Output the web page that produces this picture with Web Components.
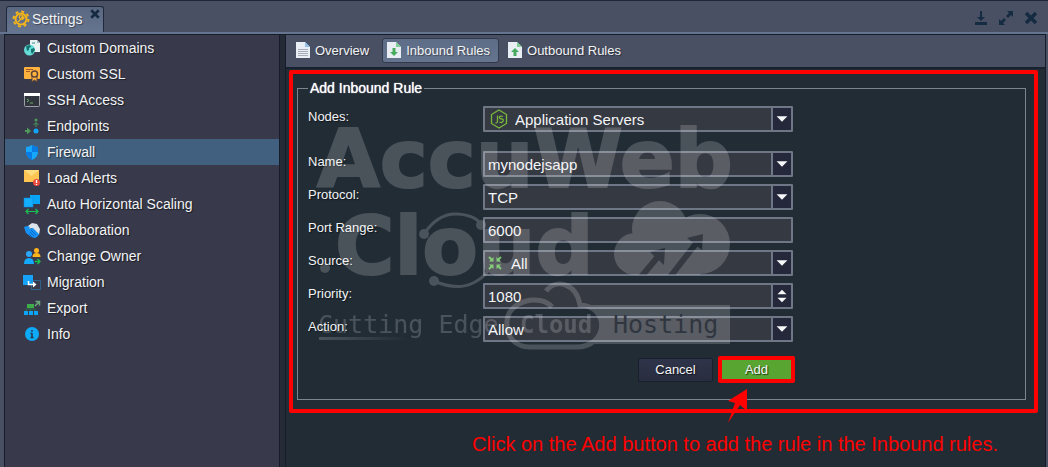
<!DOCTYPE html>
<html lang="en">

<head>
    <meta charset="UTF-8">
    <meta name="viewport" content="width=device-width, initial-scale=1.0">
    <title>Settings</title>
    <style>
        body {
            margin: 0;
            font: 14px "Liberation Sans", Arial, sans-serif;
            color: #f2f4f6;
            background: #495063;
        }
    </style>
</head>

<body>
    <settings-window>
        <app-icon slot="tab" name="gear"></app-icon>
        <span slot="tab">Settings</span>

        <side-item slot="menu" icon="domains">Custom Domains</side-item>
        <side-item slot="menu" icon="ssl">Custom SSL</side-item>
        <side-item slot="menu" icon="ssh">SSH Access</side-item>
        <side-item slot="menu" icon="endpoints">Endpoints</side-item>
        <side-item slot="menu" icon="firewall" active>Firewall</side-item>
        <side-item slot="menu" icon="alerts">Load Alerts</side-item>
        <side-item slot="menu" icon="scaling">Auto Horizontal Scaling</side-item>
        <side-item slot="menu" icon="collab">Collaboration</side-item>
        <side-item slot="menu" icon="owner">Change Owner</side-item>
        <side-item slot="menu" icon="migration">Migration</side-item>
        <side-item slot="menu" icon="export">Export</side-item>
        <side-item slot="menu" icon="info">Info</side-item>

        <tool-tab slot="toolbar" icon="page">Overview</tool-tab>
        <tool-tab slot="toolbar" icon="inbound" active>Inbound Rules</tool-tab>
        <tool-tab slot="toolbar" icon="outbound">Outbound Rules</tool-tab>

        <rule-form></rule-form>
    </settings-window>

    <script>
        // inner markup of the 16x16 icons
        const icons = {
            gear: `<g fill="none" stroke="#f5b519"><circle cx="8" cy="8" r="5.500" stroke-width="2"/>
                <circle cx="8" cy="8" r="7.500" stroke-width="2" stroke-dasharray="2.950 2.940"/></g>
                <path d="M5 11l3-3M8 8a2 2 0 1 1 2-3l-1.500 1.500 1 1L11 6a2 2 0 0 1-3 2z" stroke="#f5b519" stroke-width="1.200" fill="none"/>`,
            domains: `<path d="M6 0h7l3 3v9H6z" fill="#e8f1f2"/><path d="M13 0l3 3h-3z" fill="#9fb8bd"/><path d="M8 3h3" stroke="#2f8f88"/>
                <circle cx="5.500" cy="10" r="5.500" fill="#65dcd8"/><path d="M2 6l4-1 1 2-2 1v2l-2 1zM7 9l3-1 1 2-3 4-1-2z" fill="#17736f"/>`,
            ssl: `<rect y="1" width="16" height="12" rx="1" fill="#ffb13d"/><path d="M2 3.500h7M2 5.500h4" stroke="#a75b2b"/>
                <path d="M8 10v6l2.500-2 2.500 2v-6z" fill="#ffb13d" stroke="#5c4339"/><circle cx="10.500" cy="8" r="3" fill="#ffb13d" stroke="#5c4339" stroke-width="1.500"/>`,
            ssh: `<rect x=".5" y="1.500" width="15" height="13" rx="1" fill="#30343c" stroke="#9da0a6"/><path d="M0 1h16v3H0z" fill="#fff"/>
                <path d="M3 7l2 1.500L3 10M6 11h3" fill="none" stroke="#6cab69"/>`,
            endpoints: `<circle cx="12" cy="13" r="2.500" fill="#11a5f5"/><circle cx="12" cy="2" r="1.500" fill="#4d9a5b"/>
                <path d="M12 9V5M9.500 7L12 4.500 14.500 7" stroke="#4d9a5b" fill="none"/><path d="M1 12h2V9.500L7 13l-4 3.500V14H1z" fill="#4d9a5b"/>`,
            firewall: `<path d="M8 1q3 2 6 2v5q0 5-6 8-6-3-6-8V3q3 0 6-2z" fill="#16a8ff"/><path d="M8 1q3 2 6 2v5H8zM2 8h6v8q-6-3-6-8z" fill="#087be4"/>`,
            alerts: `<path d="M0 0h15v12H0z" fill="#ffc451"/><path d="M0 0h15L7.500 6z" fill="#ffdc7e"/>
                <circle cx="12.500" cy="12.500" r="3.500" fill="#e84a3c"/><path d="M12.500 10v3M12.500 14v1" stroke="#fff" stroke-width="1.300"/>`,
            scaling: `<rect x="6" y="-1" width="10" height="9" fill="#08a4f7"/><rect x="0" y="2" width="9" height="9" fill="#14aeff" stroke="#0a86d3" stroke-width=".5"/>
                <path d="M2 15.500h12M4.500 13L2 15.500 4.500 18M11.500 13l2.500 2.500-2.500 2.500" fill="none" stroke="#18c352" stroke-width="1.200"/>`,
            collab: `<path d="M4 4l4-3 5 1 3 5-1 6-5-4-2-3-3 1z" fill="#dce3ea"/><path d="M0 5l3-1 3 1-1 2 4-1 6 6-1 2-1 1-2 1-4-1-5-4z" fill="#1592f4"/>
                <path d="M7 8l5 5M6 10l4 4M5 12l3 3" stroke="#0969c8" fill="none"/>`,
            owner: `<circle cx="12.500" cy="2.500" r="2.500" fill="#ffb31a"/><path d="M8.500 9q0-4 4-4t4 4z" fill="#ffb31a"/>
                <circle cx="5" cy="6" r="3" fill="#2aa6ff"/><path d="M0 16q0-6 5-6t5 6z" fill="#12a9ff"/><path d="M11 13.500h5M13.500 11l2.500 2.500-2.500 2.500" stroke="#18c352" fill="none" stroke-width="1.300"/>`,
            migration: `<rect x="-1" y="1" width="10" height="10" fill="#15a3f9"/><path d="M7.500 6.500h9v9h-9z" fill="none" stroke="#2588c9" stroke-dasharray="1 1"/>
                <path d="M4.500 7v3.500H10" fill="none" stroke="#fff" stroke-width="1.500"/><path d="M9 7.500l3.500 3L9 13.500z" fill="#fff"/>`,
            export: `<path d="M3 4h7v4H3z" fill="#3fae4a"/><path d="M2 11V9h9v2M6.500 8v3" stroke="#2c6e45" fill="none"/><path d="M0 11h4v4H0zM5 11h4v4H5zM10 11h4v4h-4z" fill="#0ca5f5"/>
                <path d="M11 6l4-4M11.500 1.500H15.500V5.500" stroke="#6ba97a" stroke-width="1.500" fill="none"/>`,
            info: `<circle cx="8" cy="8" r="7" fill="#0caaf8"/><path d="M8 4v1.800M8 7v5M6.500 7.500H8M6.500 11.500h3" stroke="#25344a" stroke-width="1.500"/>`,
            page: `<path d="M1 0h9l5 5v11H1z" fill="#e9eef4"/><path d="M10 0l5 5h-5z" fill="#8fc0ea"/><path d="M3 7.500h10M3 9.500h10M3 11.500h10M3 13.500h10" stroke="#a6adb8"/>`,
            inbound: `<path d="M1 0h9l5 5v11H1z" fill="#e9eef4"/><path d="M10 0l5 5h-5z" fill="#7fcf91"/><path d="M6.500 6h3v4H12l-4 4-4-4h2.500z" fill="#46ab5c"/>`,
            outbound: `<path d="M1 0h9l5 5v11H1z" fill="#e9eef4"/><path d="M10 0l5 5h-5z" fill="#7fcf91"/><path d="M6.500 14h3v-4H12L8 6l-4 4h2.500z" fill="#46ab5c"/>`,
            node: `<path d="M8-1l7.500 4.500v9L8 17 .5 12.500v-9z" fill="none" stroke="#79b93c" stroke-width="1.300"/>
                <path d="M6.500 4.500v6q0 1.500-2 1.500M12 5.500q-3-1-3.500.5t2 1.800 1.500 2.400-3.500.8" fill="none" stroke="#79b93c" stroke-width="1.300"/>`,
            all: `<path d="M2 2l3 3M14 2l-3 3M2 14l3-3M14 14l-3-3" stroke="#6cc45c" stroke-width="1.800"/>
                <path d="M6.500 2v4.500H2zM9.500 2v4.500H14zM6.500 14V9.500H2zM9.500 14V9.500H14z" fill="#6cc45c"/>`,
            tray: `<path d="M7 1h2v6h3l-4 4-4-4h3zM2 12h12v3H2z"/>`,
            expand: `<path d="M9 1h6v6l-2-2-3 3-2-2 3-3zM1 9l2 2 3-3 2 2-3 3 2 2H1z"/>`,
            close: `<path d="M3 3l10 10M13 3L3 13" stroke="currentColor" stroke-width="3.500"/>`
        };

        customElements.define('app-icon', class extends HTMLElement {
            constructor() {
                super();
                this.attachShadow({ mode: 'open' });
            }
            connectedCallback() {
                this.shadowRoot.innerHTML = `
                    <style>
                        :host { display: inline-flex; flex: none; width: 16px; height: 16px; }
                        svg { width: 100%; height: 100%; overflow: visible; fill: currentColor; }
                    </style>
                    <svg viewBox="0 0 16 16" aria-hidden="true">${icons[this.getAttribute('name')]}</svg>
                `;
            }
        });

        customElements.define('side-item', class extends HTMLElement {
            constructor() {
                super();
                const shadowRoot = this.attachShadow({ mode: 'open' });
                shadowRoot.innerHTML = `
                    <style>
                        :host { display: block; }
                        a {
                            display: flex;
                            align-items: center;
                            gap: 7px;
                            height: 26px;
                            padding-left: 19px;
                            color: inherit;
                            text-decoration: none;
                            text-shadow: 1px 1px 1px #0008;
                        }
                        :host([active]) a { background: #41607f; }
                    </style>
                    <a href="#"><app-icon name="${this.getAttribute('icon')}"></app-icon><slot></slot></a>
                `;
            }
        });

        customElements.define('tool-tab', class extends HTMLElement {
            constructor() {
                super();
                const shadowRoot = this.attachShadow({ mode: 'open' });
                shadowRoot.innerHTML = `
                    <style>
                        :host { display: block; }
                        button {
                            display: flex;
                            align-items: center;
                            gap: 4px;
                            height: 25px;
                            padding: 0 8px 0 3px;
                            font: inherit;
                            font-size: 13px;
                            color: inherit;
                            background: none;
                            border: 1px solid transparent;
                            border-radius: 3px;
                            text-shadow: 1px 1px 1px #0006;
                        }
                        :host([active]) button {
                            background: linear-gradient(#5d6c87, #66758f);
                            border-color: #31394b;
                        }
                    </style>
                    <button type="button"><app-icon name="${this.getAttribute('icon')}"></app-icon><slot></slot></button>
                `;
            }
        });

        // label + control in one shadow root so that "for" works
        customElements.define('form-field', class extends HTMLElement {
            constructor() {
                super();
                this.attachShadow({ mode: 'open' });
            }
            connectedCallback() {
                const value = this.getAttribute('value');
                const type = this.getAttribute('type');
                const icon = this.getAttribute('icon');
                const control = type === 'select'
                    ? `<select id="control"><option>${value}</option></select>`
                    : `<input id="control" type="text" value="${value}">`;
                const arrows = {
                    select: '<path d="M4 8h12l-6 6z"/>',
                    spin: '<path d="M5 9h10l-5-5zM5 13h10l-5 5z"/>'
                };
                this.shadowRoot.innerHTML = `
                    <style>
                        :host { display: grid; grid-template-columns: 175px minmax(0, 310px); }
                        label { padding-top: 1px; font-size: 13px; line-height: 20px; text-shadow: 1px 1px 1px #0008; }
                        .box {
                            display: flex;
                            align-items: stretch;
                            box-sizing: border-box;
                            height: 26px;
                            border: 2px solid #6f7685;
                            border-radius: 1px;
                            background: #353942;
                        }
                        app-icon { align-self: center; }
                        .all { padding-left: 2px; }
                        select, input {
                            flex: 1;
                            min-width: 0;
                            margin: 0;
                            padding: 0 3px;
                            border: 0;
                            outline: 0;
                            appearance: none;
                            background: none;
                            color: #f4f5f7;
                            font: inherit;
                            font-size: 15px;
                        }
                        .node { padding-left: 6px; }
                        .node select { padding-left: 8px; }
                        .all select { padding-left: 8px; }
                        .trigger {
                            width: 18px;
                            padding: 0;
                            flex: none;
                            border: 0;
                            border-left: 2px solid #6f7685;
                            background: #25283a;
                            box-sizing: content-box;
                        }
                        .trigger svg { display: block; width: 18px; height: 20px; fill: #f6f7f9; }
                    </style>
                    <label for="control">${this.getAttribute('label')}</label>
                    <div class="box ${icon || ''}">
                        ${icon ? `<app-icon name="${icon}"></app-icon>` : ''}
                        ${control}
                        ${arrows[type] ? `<button class="trigger" type="button" tabindex="-1" aria-label="Change value"><svg viewBox="0 0 20 22">${arrows[type]}</svg></button>` : ''}
                    </div>
                `;
            }
        });

        // translucent brand mark laid over the form
        customElements.define('brand-mark', class extends HTMLElement {
            constructor() {
                super();
                const shadowRoot = this.attachShadow({ mode: 'open' });
                shadowRoot.innerHTML = `
                    <style>
                        :host { display: block; pointer-events: none; }
                        svg { display: block; width: 412px; height: 236px; overflow: visible; }
                        .big { font: bold 81px "DejaVu Sans", sans-serif; stroke: #fff; stroke-width: 2px; }
                        .mono { font: 25px "DejaVu Sans Mono", monospace; }
                        .strong { font-size: 24px; font-weight: bold; }
                    </style>
                    <svg viewBox="0 0 412 236">
                        <defs>
                            <linearGradient id="fade"><stop stop-color="#fff"/><stop offset="1" stop-color="#fff" stop-opacity="0"/></linearGradient>
                            <mask id="arrows">
                                <path fill="#fff" d="M290 78h130v85H290z"/>
                                <path d="M323 159L343 135M352 159L380 123" stroke="#000" stroke-width="6"/>
                                <path d="M332 134l15-4-1 17zM369 120l16-4-1 16z"/>
                            </mask>
                        </defs>
                        <g fill="#fff" opacity=".18">
                            <text class="big" x="-1" y="69">AccuWeb</text>
                            <text class="big" x="17" y="156">Cloud</text>
                            <g mask="url(#arrows)">
                                <circle cx="317" cy="136" r="21"/>
                                <circle cx="342" cy="111" r="28"/>
                                <circle cx="382" cy="126" r="30"/>
                                <path d="M317 126h65v31h-65z"/>
                            </g>
                            <circle cx="7" cy="150" r="5"/>
                            <g fill="none" stroke="#fff" stroke-width="3">
                                <path d="M106 116Q120 95 139 96T163 107M116 163Q139 173 155 165T171 147"/>
                            </g>
                            <circle cx="106" cy="116" r="5"/><circle cx="163" cy="107" r="5"/>
                            <circle cx="116" cy="163" r="5"/><circle cx="171" cy="149" r="5"/>
                            <text class="mono" x="0" y="215">Cutting Edge</text>
                            <text class="mono strong" x="202" y="215">Cloud</text>
                            <path d="M1 219h90v3H1z" fill="url(#fade)"/>
                            <path d="M234 189C222 175 190 183 189 203C188 220 198 229 212 229H258C291 229 292 188 262 187C258 165 238 160 228 173" fill="none" stroke="#fff" stroke-width="5"/>
                            <path d="M272 187H412V226H272Q291 208 272 187z"/>
                        </g>
                        <text class="mono" x="295" y="215" fill="#303640">Hosting</text>
                    </svg>
                `;
            }
        });

        customElements.define('rule-form', class extends HTMLElement {
            constructor() {
                super();
                const shadowRoot = this.attachShadow({ mode: 'open' });
                shadowRoot.innerHTML = `
                    <style>
                        :host { display: block; padding: 1px 7px 0 3px; }
                        .highlight {
                            position: relative;
                            border: 4px solid #f00;
                            border-radius: 2px;
                            padding: 6px 8px 9px 4px;
                        }
                        fieldset {
                            margin: 0;
                            min-width: 0;
                            padding: 10px 10px 16px;
                            border: 1px solid #7c858e;
                        }
                        legend { padding: 0 2px; line-height: 16px; color: #fff; text-shadow: 0 0 1px #fff; }
                        form { display: flex; flex-direction: column; gap: 7px; }
                        form-field:first-child { margin-bottom: 12px; }
                        .actions {
                            display: flex;
                            justify-content: flex-end;
                            align-items: center;
                            gap: 5px;
                            max-width: 487px;
                            margin-top: 7px;
                        }
                        .actions button {
                            box-sizing: border-box;
                            width: 75px;
                            height: 24px;
                            padding: 0;
                            border: 1px solid #191f2c;
                            border-radius: 2px;
                            color: #f4f5f7;
                            background: linear-gradient(#30344a, #292d40);
                            font: inherit;
                            font-size: 13px;
                            text-shadow: 1px 1px 1px #000a;
                        }
                        .actions .add {
                            width: 77px;
                            height: 27px;
                            border: 4px solid #f00;
                            background: #58a531;
                        }
                        brand-mark { position: absolute; left: 25px; top: 44px; }
                        .pointer {
                            position: absolute;
                            left: 434px;
                            top: 315px;
                            width: 22px;
                            height: 36px;
                            fill: #f00;
                        }
                        .note {
                            margin: 19px 40px 0 0;
                            text-align: right;
                            font-size: 20px;
                            line-height: 24px;
                            color: #f00;
                        }
                    </style>
                    <div class="highlight">
                        <fieldset>
                            <legend>Add Inbound Rule</legend>
                            <form>
                                <form-field label="Nodes:" type="select" icon="node" value="Application Servers"></form-field>
                                <form-field label="Name:" type="select" value="mynodejsapp"></form-field>
                                <form-field label="Protocol:" type="select" value="TCP"></form-field>
                                <form-field label="Port Range:" type="text" value="6000"></form-field>
                                <form-field label="Source:" type="select" icon="all" value="All"></form-field>
                                <form-field label="Priority:" type="spin" value="1080"></form-field>
                                <form-field label="Action:" type="select" value="Allow"></form-field>
                                <div class="actions">
                                    <button type="button">Cancel</button>
                                    <button type="button" class="add">Add</button>
                                </div>
                            </form>
                        </fieldset>
                        <brand-mark></brand-mark>
                        <svg class="pointer" viewBox="0 0 22 36"><path d="M20 0L1 12l7 2L1 34l12-18 7 6z"/></svg>
                    </div>
                    <p class="note">Click on the Add button to add the rule in the Inbound rules.</p>
                `;
            }
        });

        customElements.define('settings-window', class extends HTMLElement {
            constructor() {
                super();
                const shadowRoot = this.attachShadow({ mode: 'open' });
                shadowRoot.innerHTML = `
                    <style>
                        :host {
                            display: flex;
                            flex-direction: column;
                            box-sizing: border-box;
                            min-height: 100vh;
                            border-top: 1px solid #20263a;
                        }
                        header {
                            display: flex;
                            justify-content: space-between;
                            align-items: flex-end;
                            height: 31px;
                            padding: 0 9px 0 6px;
                            border-bottom: 2px solid #66758f;
                        }
                        .tab {
                            display: flex;
                            align-items: center;
                            box-sizing: border-box;
                            height: 26px;
                            padding: 0 2px 1px 6px;
                            border: 1px solid #20283a;
                            border-bottom: 0;
                            border-radius: 3px 3px 0 0;
                            background: linear-gradient(#5a6882, #66758f);
                            text-shadow: 1px 1px 1px #0006;
                        }
                        .title { display: flex; align-items: center; gap: 3px; }
                        .tab button { align-self: flex-start; margin: 1px 0 0 6px; }
                        button {
                            display: flex;
                            padding: 0;
                            border: 0;
                            background: none;
                            color: #142b41;
                        }
                        .tab app-icon { width: 12px; height: 12px; }
                        .tools { display: flex; gap: 9px; padding-bottom: 6px; }
                        .body {
                            flex: 1;
                            display: flex;
                            gap: 5px;
                            margin: 0 2px 0 4px;
                            border: 1px solid #161c28;
                            border-bottom: 0;
                            background: #252b36;
                        }
                        nav {
                            box-sizing: border-box;
                            flex: 0 0 275px;
                            border-right: 1px solid #161c28;
                            background: #383a4b;
                        }
                        main {
                            flex: 1;
                            min-width: 0;
                            border-left: 1px solid #161c28;
                            background: #222c35;
                        }
                        .toolbar {
                            display: flex;
                            align-items: center;
                            box-sizing: border-box;
                            gap: 4px;
                            height: 34px;
                            padding: 0 0 2px 5px;
                            border-bottom: 2px solid #172130;
                            background: #495063;
                        }
                    </style>
                    <header>
                        <div class="tab">
                            <div class="title"><slot name="tab"></slot></div>
                            <button type="button" aria-label="Close tab"><app-icon name="close"></app-icon></button>
                        </div>
                        <div class="tools">
                            <button type="button" aria-label="Minimize"><app-icon name="tray"></app-icon></button>
                            <button type="button" aria-label="Maximize"><app-icon name="expand"></app-icon></button>
                            <button type="button" aria-label="Close"><app-icon name="close"></app-icon></button>
                        </div>
                    </header>
                    <div class="body">
                        <nav><slot name="menu"></slot></nav>
                        <main>
                            <div class="toolbar"><slot name="toolbar"></slot></div>
                            <slot></slot>
                        </main>
                    </div>
                `;
            }
        });
    </script>
</body>

</html>
